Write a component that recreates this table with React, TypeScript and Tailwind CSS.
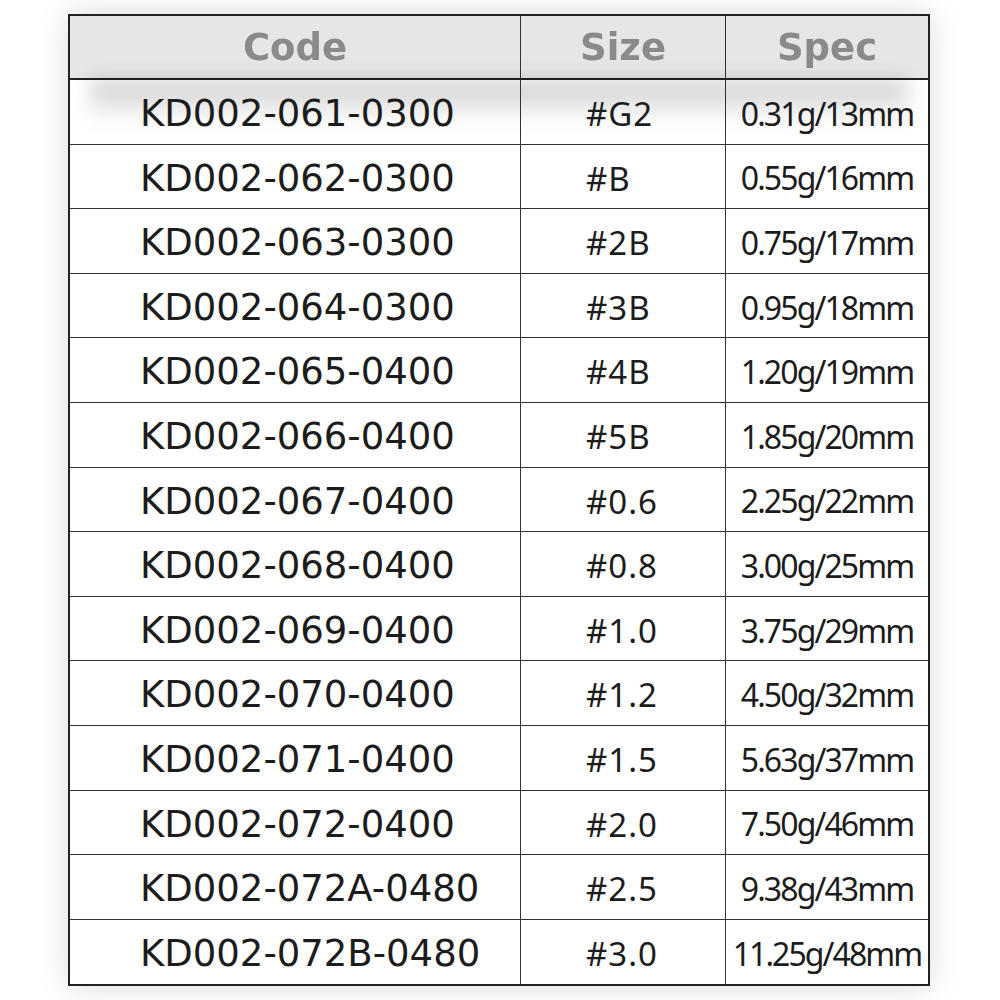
import React from "react";

const rows: [string, string, string][] = [
  ["KD002-061-0300", "#G2", "0.31g/13mm"],
  ["KD002-062-0300", "#B", "0.55g/16mm"],
  ["KD002-063-0300", "#2B", "0.75g/17mm"],
  ["KD002-064-0300", "#3B", "0.95g/18mm"],
  ["KD002-065-0400", "#4B", "1.20g/19mm"],
  ["KD002-066-0400", "#5B", "1.85g/20mm"],
  ["KD002-067-0400", "#0.6", "2.25g/22mm"],
  ["KD002-068-0400", "#0.8", "3.00g/25mm"],
  ["KD002-069-0400", "#1.0", "3.75g/29mm"],
  ["KD002-070-0400", "#1.2", "4.50g/32mm"],
  ["KD002-071-0400", "#1.5", "5.63g/37mm"],
  ["KD002-072-0400", "#2.0", "7.50g/46mm"],
  ["KD002-072A-0480", "#2.5", "9.38g/43mm"],
  ["KD002-072B-0480", "#3.0", "11.25g/48mm"],
];

export default function App() {
  return (
    <div className="w-[1000px] h-[1000px] bg-white pl-[68px] pt-[14px]">
      <div className="w-[862px] border-2 border-[#222] bg-white shadow-[0_0_30px_rgba(0,0,0,0.15)]">
        {/* header */}
        <div className="grid grid-cols-[451px_205px_202px] h-[64px] border-b-2 border-[#222] bg-[#e6e6e6] font-['DejaVu_Sans',sans-serif] font-bold text-[37px] text-[#8a8a8a]">
          <div className="flex items-center justify-center pt-[2px] border-r border-[#333] blur-[0.6px]">Code</div>
          <div className="flex items-center justify-center pt-[2px] border-r border-[#333] blur-[0.6px]">Size</div>
          <div className="flex items-center justify-center pt-[2px] blur-[0.6px]">Spec</div>
        </div>
        {rows.map(([code, size, spec], i) => (
          <div
            key={code}
            className={`relative grid grid-cols-[451px_205px_202px] h-[64.6px] ${i < rows.length - 1 ? "border-b border-[#333]" : ""}`}
          >
            {i === 0 && (
              <div className="absolute left-[20px] right-[20px] top-0 h-[44px] bg-gradient-to-b from-black/20 to-transparent blur-[9px]" />
            )}
            <div className="relative flex items-center justify-start pl-[70px] pt-[4px] border-r border-[#333] font-['DejaVu_Sans',sans-serif] text-[37px] text-[#1c1c1c]">
              {code}
            </div>
            <div className="relative flex items-center justify-start pl-[65px] pt-[4px] border-r border-[#333] font-['Noto_Sans',sans-serif] text-[33px] text-[#1c1c1c] tracking-[0.03em]">
              {size}
            </div>
            <div className="relative flex items-center justify-center pt-[4px] font-['Noto_Sans',sans-serif] text-[32px] text-[#1c1c1c] tracking-[-0.06em]">
              {spec}
            </div>
          </div>
        ))}
      </div>
    </div>
  );
}
